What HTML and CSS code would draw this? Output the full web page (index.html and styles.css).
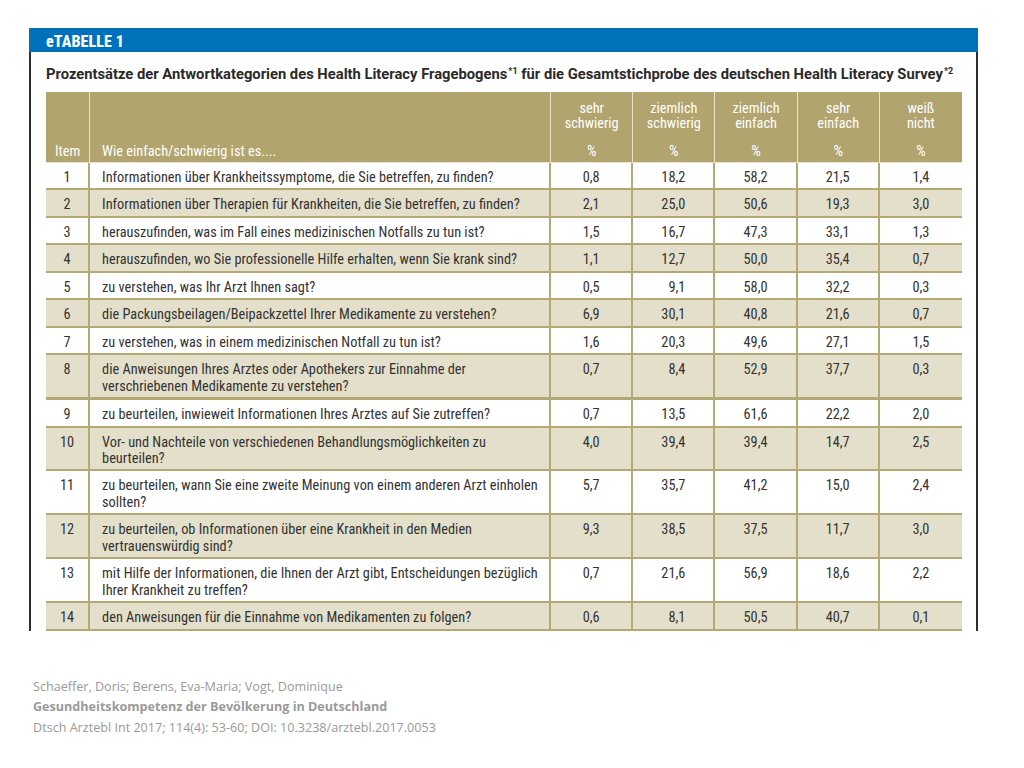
FILE: index.html
```html
<!DOCTYPE html>
<html lang="de">
<head>
<meta charset="utf-8">
<title>eTABELLE 1</title>
<link rel="stylesheet" href="styles.css">
</head>
<body>
<div class="sheet">
  <div class="bar">eTABELLE 1</div>
  <div class="panel">
    <h1 class="title">Prozentsätze der Antwortkategorien des Health Literacy Fragebogens<sup>*1</sup> für die Gesamtstichprobe des deutschen Health Literacy Survey<sup>*2</sup></h1>
    <table class="data">
      <colgroup>
        <col class="c-item"><col class="c-text"><col class="c-num"><col class="c-num"><col class="c-num"><col class="c-num"><col class="c-num">
      </colgroup>
      <thead>
        <tr>
          <th class="h-item">Item</th>
          <th class="h-text">Wie einfach/schwierig ist es....</th>
          <th class="h-num"><div class="lbl">sehr<br>schwierig</div><div class="pct">%</div></th>
          <th class="h-num"><div class="lbl">ziemlich<br>schwierig</div><div class="pct">%</div></th>
          <th class="h-num"><div class="lbl">ziemlich<br>einfach</div><div class="pct">%</div></th>
          <th class="h-num"><div class="lbl">sehr<br>einfach</div><div class="pct">%</div></th>
          <th class="h-num last"><div class="lbl">weiß<br>nicht</div><div class="pct">%</div></th>
        </tr>
      </thead>
      <tbody>
        <tr><td class="item">1</td><td class="text">Informationen über Krankheitssymptome, die Sie betreffen, zu finden?</td><td>0,8</td><td>18,2</td><td>58,2</td><td>21,5</td><td class="last">1,4</td></tr>
        <tr class="alt"><td class="item">2</td><td class="text">Informationen über Therapien für Krankheiten, die Sie betreffen, zu finden?</td><td>2,1</td><td>25,0</td><td>50,6</td><td>19,3</td><td class="last">3,0</td></tr>
        <tr><td class="item">3</td><td class="text">herauszufinden, was im Fall eines medizinischen Notfalls zu tun ist?</td><td>1,5</td><td>16,7</td><td>47,3</td><td>33,1</td><td class="last">1,3</td></tr>
        <tr class="alt"><td class="item">4</td><td class="text">herauszufinden, wo Sie professionelle Hilfe erhalten, wenn Sie krank sind?</td><td>1,1</td><td>12,7</td><td>50,0</td><td>35,4</td><td class="last">0,7</td></tr>
        <tr><td class="item">5</td><td class="text">zu verstehen, was Ihr Arzt Ihnen sagt?</td><td>0,5</td><td>&#8199;9,1</td><td>58,0</td><td>32,2</td><td class="last">0,3</td></tr>
        <tr class="alt"><td class="item">6</td><td class="text">die Packungsbeilagen/Beipackzettel Ihrer Medikamente zu verstehen?</td><td>6,9</td><td>30,1</td><td>40,8</td><td>21,6</td><td class="last">0,7</td></tr>
        <tr><td class="item">7</td><td class="text">zu verstehen, was in einem medizinischen Notfall zu tun ist?</td><td>1,6</td><td>20,3</td><td>49,6</td><td>27,1</td><td class="last">1,5</td></tr>
        <tr class="alt"><td class="item">8</td><td class="text">die Anweisungen Ihres Arztes oder Apothekers zur Einnahme der<br>verschriebenen Medikamente zu verstehen?</td><td>0,7</td><td>&#8199;8,4</td><td>52,9</td><td>37,7</td><td class="last">0,3</td></tr>
        <tr class="sep"><td class="item">9</td><td class="text">zu beurteilen, inwieweit Informationen Ihres Arztes auf Sie zutreffen?</td><td>0,7</td><td>13,5</td><td>61,6</td><td>22,2</td><td class="last">2,0</td></tr>
        <tr class="alt"><td class="item">10</td><td class="text">Vor- und Nachteile von verschiedenen Behandlungsmöglichkeiten zu<br>beurteilen?</td><td>4,0</td><td>39,4</td><td>39,4</td><td>14,7</td><td class="last">2,5</td></tr>
        <tr><td class="item">11</td><td class="text">zu beurteilen, wann Sie eine zweite Meinung von einem anderen Arzt einholen<br>sollten?</td><td>5,7</td><td>35,7</td><td>41,2</td><td>15,0</td><td class="last">2,4</td></tr>
        <tr class="alt"><td class="item">12</td><td class="text">zu beurteilen, ob Informationen über eine Krankheit in den Medien<br>vertrauenswürdig sind?</td><td>9,3</td><td>38,5</td><td>37,5</td><td>11,7</td><td class="last">3,0</td></tr>
        <tr><td class="item">13</td><td class="text">mit Hilfe der Informationen, die Ihnen der Arzt gibt, Entscheidungen bezüglich<br>Ihrer Krankheit zu treffen?</td><td>0,7</td><td>21,6</td><td>56,9</td><td>18,6</td><td class="last">2,2</td></tr>
        <tr class="alt"><td class="item">14</td><td class="text">den Anweisungen für die Einnahme von Medikamenten zu folgen?</td><td>0,6</td><td>&#8199;8,1</td><td>50,5</td><td>40,7</td><td class="last">0,1</td></tr>
      </tbody>
    </table>
  </div>
</div>
<div class="cite">
  <p>Schaeffer, Doris; Berens, Eva-Maria; Vogt, Dominique</p>
  <p class="strong">Gesundheitskompetenz der Bevölkerung in Deutschland</p>
  <p>Dtsch Arztebl Int 2017; 114(4): 53-60; DOI: 10.3238/arztebl.2017.0053</p>
</div>
</body>
</html>
```

FILE: styles.css
```css
* { box-sizing: border-box; }

html, body {
  margin: 0;
  padding: 0;
  background: #ffffff;
}

body {
  font-family: Roboto, "Liberation Sans", Arial, sans-serif;
  font-stretch: 75%;
  color: #333333;
}

.sheet {
  width: 949px;
  margin: 28px 0 0 29px;
}

.bar {
  height: 24px;
  background: #0071bb;
  color: #ffffff;
  font-weight: 800;
  font-size: 16px;
  line-height: 24px;
  padding: 2px 0 0 17px;
  letter-spacing: 0.1px;
  white-space: nowrap;
  overflow: hidden;
}

.panel {
  border-left: 2px solid #2e2e2e;
  border-right: 2px solid #2e2e2e;
  padding: 0 14px 0 15px;
}

.title {
  margin: 0;
  padding: 13px 0 0 0;
  height: 40px;
  font-size: 14.75px;
  font-stretch: 94%;
  line-height: 18px;
  font-weight: bold;
  color: #2a2a2a;
  white-space: nowrap;
}

.title sup {
  font-size: 9px;
  line-height: 0;
  vertical-align: 5px;
  margin-left: 1px;
}

.data {
  width: 916px;
  table-layout: fixed;
  border-collapse: separate;
  border-spacing: 0;
  font-size: 14.3px;
}

.c-item { width: 44px; }
.c-text { width: 460px; }
.c-num { width: 82px; }

thead th {
  background: #b1a46e;
  color: #ffffff;
  font-weight: normal;
  height: 71px;
  padding: 7px 4px 3px;
  border-right: 1px solid #e8e2c8;
  border-bottom: 1px solid #e8e2c8;
  vertical-align: bottom;
  line-height: 15px;
}

thead th.last { border-right: none; }

.h-item { text-align: center; }
.h-text { text-align: left; padding-left: 12px; }

.h-num { text-align: center; }
.h-num .lbl { line-height: 15px; }
.h-num .pct { margin-top: 13px; line-height: 15px; font-size: 15px; }

tbody td {
  padding: 6px 4px 3px;
  line-height: 16.45px;
  vertical-align: top;
  text-align: center;
  border-right: 2px solid #b5a873;
  border-bottom: 2px solid #b5a873;
  color: #333333;
  background: #ffffff;
}

tbody tr.alt td { background: #e4dfca; }

tbody tr.alt + tr.sep td { border-top: 1px solid #b5a873; }

tbody td.last { border-right: none; }

tbody td.text {
  text-align: left;
  padding-left: 12px;
  padding-right: 2px;
  white-space: nowrap;
}

.cite {
  margin: 46px 0 0 33px;
  font-family: "Open Sans", "Liberation Sans", sans-serif;
  font-stretch: normal;
  font-size: 12.6px;
  color: #9a9a9a;
}

.cite p {
  margin: 0;
  line-height: 20.5px;
}

.cite .strong { font-weight: bold; }
```
